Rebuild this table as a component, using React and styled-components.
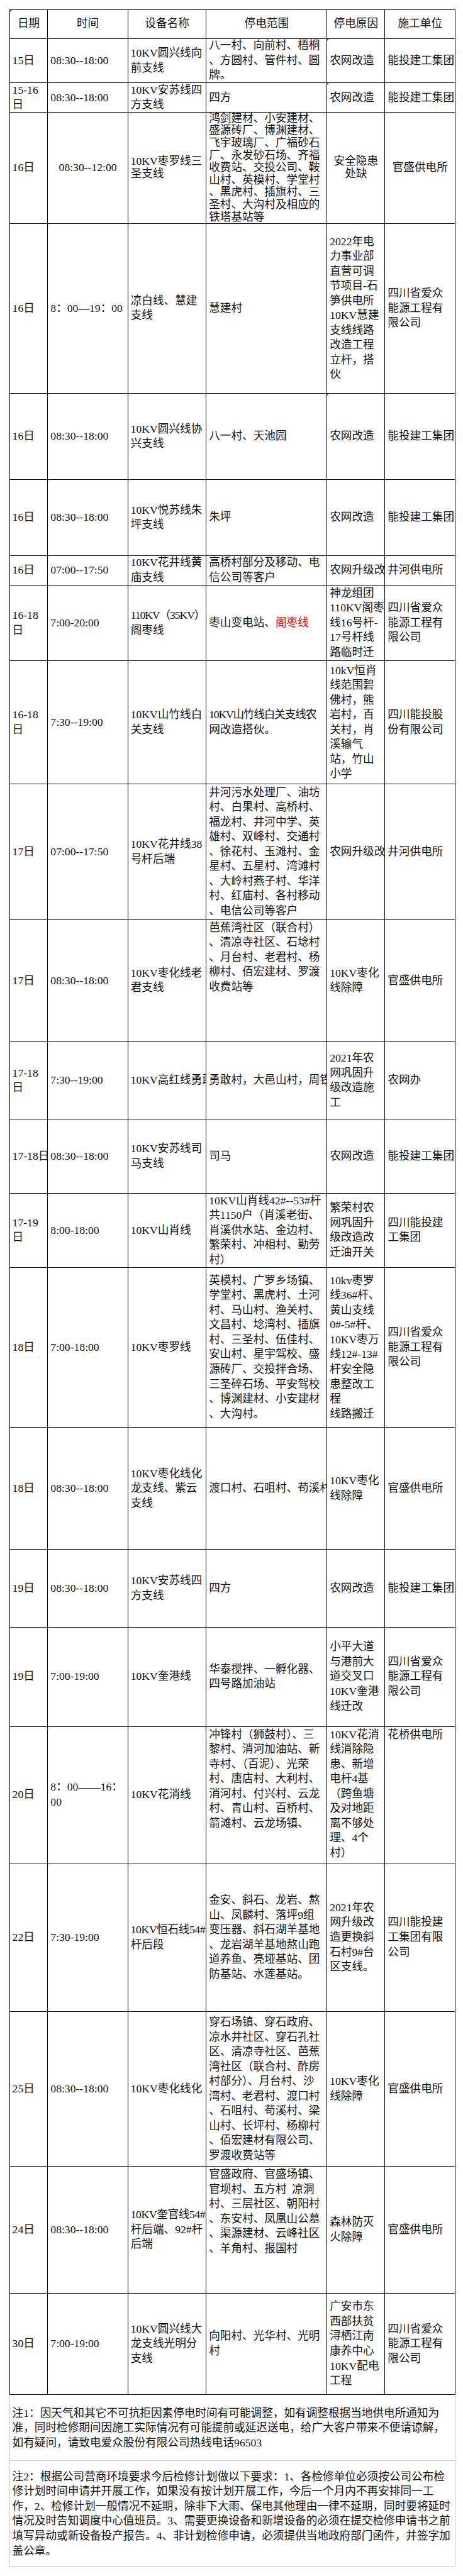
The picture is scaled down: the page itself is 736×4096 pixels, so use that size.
import styled, { createGlobalStyle } from 'styled-components';

const GlobalStyle = createGlobalStyle`
  body {
    margin: 0;
    background: #fff;
    font-family: "Liberation Serif", "Noto Sans CJK SC", serif;
    color: #111;
  }
`;

const COLS = '61px 129px 126px 195px 93px 113px';

const header = ['日期', '时间', '设备名称', '停电范围', '停电原因', '施工单位'];

const rows = [
  { h: 71, cells: [['15日'], ['08:30--18:00'], ['10KV圆兴线向', '前支线'], ['八一村、向前村、梧桐', '、方圆村、管件村、圆', '牌。'], { lines: ['农网改造'], mark: true }, ['能投建工集团']] },
  { h: 47, cells: [['15-16', '日'], ['08:30--18:00'], ['10KV安苏线四', '方支线'], ['四方'], { lines: ['农网改造'], mark: true }, ['能投建工集团']] },
  {
    h: 179, lh: 20, cells: [
      ['16日'], { lines: ['08:30--12:00'], center: true }, ['10KV枣罗线三', '圣支线'],
      ['鸿剑建材、小安建材、', '盛源砖厂、博渊建材、', '飞宇玻璃厂、广福砂石', '厂、永发砂石场、齐福', '收费站、交投公司、鞍', '山村、英模村、学堂村', '、黑虎村、插旗村、三', '圣村、大沟村及相应的', '铁塔基站等'],
      { lines: ['安全隐患', '处缺'], center: true }, { lines: ['官盛供电所'], center: true },
    ],
  },
  {
    h: 275, cells: [
      ['16日'], ['8：00—19：00'], ['凉白线、慧建', '支线'], ['慧建村'],
      ['2022年电', '力事业部', '直营可调', '节项目-石', '笋供电所', '10KV慧建', '支线线路', '改造工程', '立杆，搭', '伙'],
      ['四川省爱众', '能源工程有', '限公司'],
    ],
  },
  { h: 139, cells: [['16日'], ['08:30--18:00'], ['10KV圆兴线协', '兴支线'], ['八一村、天池园'], { lines: ['农网改造'], mark: true }, ['能投建工集团']] },
  { h: 122, cells: [['16日'], ['08:30--18:00'], ['10KV悦苏线朱', '坪支线'], ['朱坪'], ['农网改造'], ['能投建工集团']] },
  { h: 47, cells: [['16日'], ['07:00--17:50'], ['10KV花井线黄', '庙支线'], ['高桥村部分及移动、电', '信公司等客户'], ['农网升级改造'], ['井河供电所']] },
  {
    h: 122, cells: [
      ['16-18', '日'], ['7:00-20:00'], [{ t: '110KV（35KV）', ls: -1.1 }, '阁枣线'], ['RED'],
      ['神龙组团', '110KV阁枣', '线16号杆-', '17号杆线', '路临时迁'], ['四川省爱众', '能源工程有', '限公司'],
    ],
  },
  {
    h: 199, cells: [
      ['16-18', '日'], ['7:30--19:00'], ['10KV山竹线白', '关支线'], [{ t: '10KV山竹线白关支线农', ls: -1.2 }, '网改造搭伙。'],
      ['10kV恒肖', '线范围碧', '佛村，熊', '岩村，百', '关村，肖', '溪输气', '站，竹山', '小学'], ['四川能投股', '份有限公司'],
    ],
  },
  {
    h: 219, cells: [
      ['17日'], ['07:00--17:50'], ['10KV花井线38', '号杆后端'],
      ['井河污水处理厂、油坊', '村、白果村、高桥村、', '福龙村、井河中学、英', '雄村、双峰村、交通村', '、徐花村、玉滩村、金', '星村、五星村、湾滩村', '、大岭村燕子村、华洋', '村、红庙村、各村移动', '、电信公司等客户'],
      ['农网升级改造'], ['井河供电所'],
    ],
  },
  {
    h: 197, cells: [
      ['17日'], ['08:30--18:00'], ['10KV枣化线老', '君支线'],
      { lines: ['芭蕉湾社区（联合村）', '、清凉寺社区、石埝村', '、月台村、老君村、杨', '柳村、佰宏建材、罗渡', '收费站等'], top: true },
      ['10KV枣化', '线除障'], ['官盛供电所'],
    ],
  },
  { h: 125, cells: [['17-18', '日'], ['7:30--19:00'], ['10KV高红线勇敢支线'], ['勇敢村，大邑山村，周铁村'], ['2021年农', '网巩固升', '级改造施', '工'], ['农网办']] },
  { h: 119, cells: [['17-18日'], ['08:30--18:00'], ['10KV安苏线司', '马支线'], ['司马'], ['农网改造'], ['能投建工集团']] },
  {
    h: 119, cells: [
      ['17-19', '日'], ['8:00-18:00'], ['10KV山肖线'],
      ['10KV山肖线42#--53#杆', '共1150户（肖溪老街、', '肖溪供水站、金边村、', '繁荣村、冲相村、勤劳', '村）'],
      ['繁荣村农', '网巩固升', '级改造改', '迁油开关'], ['四川能投建', '工集团'],
    ],
  },
  {
    h: 259, cells: [
      ['18日'], ['7:00-18:00'], ['10KV枣罗线'],
      ['英模村、广罗乡场镇、', '学堂村、黑虎村、土河', '村、马山村、渔关村、', '文昌村、埝湾村、插旗', '村、三圣村、伍佳村、', '安山村、星宇驾校、盛', '源砖厂、交投拌合场、', '三圣碎石场、平安驾校', '、博渊建材、小安建材', '、大沟村。'],
      ['10kv枣罗', '线36#杆、', '黄山支线', '0#-5#杆、', '10KV枣万', '线12#-13#', '杆安全隐', '患整改工', '程', '线路搬迁'],
      ['四川省爱众', '能源工程有', '限公司'],
    ],
  },
  { h: 197, cells: [['18日'], ['08:30--18:00'], ['10KV枣化线化', '龙支线、紫云', '支线'], ['渡口村、石咀村、苟溪村'], ['10KV枣化', '线除障'], ['官盛供电所']] },
  { h: 125, cells: [['19日'], ['08:30--18:00'], ['10KV安苏线四', '方支线'], ['四方'], ['农网改造'], ['能投建工集团']] },
  {
    h: 160, cells: [
      ['19日'], ['7:00-19:00'], ['10KV奎港线'], ['华泰搅拌、一孵化器、', '四号路加油站'],
      ['小平大道', '与港前大', '道交叉口', '10KV奎港', '线迁改'], ['四川省爱众', '能源工程有', '限公司'],
    ],
  },
  {
    h: 221, cells: [
      ['20日'], ['8：00——16：', '00'], ['10KV花消线'],
      { lines: ['冲锋村（狮鼓村）、三', '黎村、消河加油站、新', '寺村、（百泥）、光荣', '村、唐店村、大利村、', '消河村、付兴村、云龙', '村、青山村、百桥村、', '箭滩村、云龙场镇、'], top: true },
      { lines: ['10KV花消', '线消除隐', '患、新增', '电杆4基', '（跨鱼塘', '及对地距', '离不够处', '理、4个', '村）'], top: true },
      { lines: ['花桥供电所'], top: true },
    ],
  },
  {
    h: 240, cells: [
      ['22日'], ['7:30-19:00'], [{ t: '10KV恒石线54#', ls: -0.4 }, '杆后段'],
      ['金安、斜石、龙岩、熬', '山、凤麟村、落坪9组', '变压器、斜石湖羊基地', '、龙岩湖羊基地熬山跑', '道养鱼、亮垭基站、团', '防基站、水莲基站。'],
      ['2021年农', '网升级改', '造更换斜', '石村9#台', '区支线。'], ['四川能投建', '工集团有限', '公司'],
    ],
  },
  {
    h: 250, cells: [
      ['25日'], ['08:30--18:00'], ['10KV枣化线化'],
      ['穿石场镇、穿石政府、', '凉水井社区、穿石孔社', '区、清凉寺社区、芭蕉', '湾社区（联合村、酢房', '村部分）、月台村、沙', '湾村、老君村、渡口村', '、石咀村、苟溪村、梁', '山村、长坪村、杨柳村', '、佰宏建材有限公司、', '罗渡收费站等'],
      ['10KV枣化', '线除障'], ['官盛供电所'],
    ],
  },
  {
    h: 205, cells: [
      ['24日'], ['08:30--18:00'], [{ t: '10KV奎官线54#', ls: -0.4 }, '杆后端、92#杆', '后端'],
      { lines: ['官盛政府、官盛场镇、', '官坝村、五方村\u2002凉洞', '村、三层社区、朝阳村', '、东安村、凤凰山公墓', '、渠源建材、云峰社区', '、羊角村、报国村'], top: true },
      ['森林防灭', '火除障'], ['官盛供电所'],
    ],
  },
  {
    h: 163, cells: [
      ['30日'], ['7:00-19:00'], ['10KV圆兴线大', '龙支线光明分', '支线'], ['向阳村、光华村、光明', '村'],
      ['广安市东', '西部扶贫', '浔栖江南', '康养中心', '10KV配电', '工程'], ['四川省爱众', '能源工程有', '限公司'],
    ],
  },
];

const notes = [
  {
    h: 104,
    lines: [
      '注1：因天气和其它不可抗拒因素停电时间有可能调整，如有调整根据当地供电所通知为',
      '准，同时检修期间因施工实际情况有可能提前或延迟送电，给广大客户带来不便请谅解，',
      '如有疑问，请致电爱众股份有限公司热线电话96503',
    ],
  },
  {
    h: 169,
    lines: [
      '注2：根据公司营商环境要求今后检修计划做以下要求：1、各检修单位必须按公司公布检',
      '修计划时间申请并开展工作，如果没有按计划开展工作，今后一个月内不再安排同一工',
      '作，2、检修计划一般情况不延期，除非下大雨、保电其他理由一律不延期，同时要将延时',
      '情况及时告知调度中心值班员。3、需要更换设备和新增设备的必须在提交检修申请书之前',
      '填写异动或新设备投产报告。4、非计划检修申请，必须提供当地政府部门函件，并签字加',
      '盖公章。',
    ],
  },
];

const Page = styled.div`
  zoom: 0.98;
  width: 750px;
  box-sizing: border-box;
  padding: 15px 0 16px 15px;
  font-size: 18px;
`;

const Sheet = styled.div`
  width: 724px;
  box-sizing: border-box;
  display: flex;
  flex-direction: column;
  gap: 1px;
  background: #000;
  border: 1px solid #000;
`;

const Row = styled.div`
  display: grid;
  grid-template-columns: ${COLS};
  gap: 1px;
  height: ${(p) => p.$h}px;
`;

const Cell = styled.div`
  position: relative;
  background: #fff;
  overflow: hidden;
  display: flex;
  flex-direction: column;
  justify-content: ${(p) => (p.$top ? 'flex-start' : 'center')};
  align-items: ${(p) => (p.$center ? 'center' : 'flex-start')};
  padding: ${(p) => (p.$top ? '1px' : '0')} 4px 0;
  line-height: ${(p) => p.$lh}px;
  white-space: nowrap;

  ${(p) =>
    p.$mark &&
    `
    &::before {
      content: '';
      position: absolute;
      top: 0;
      left: 0;
      border-top: 4px solid #1d8a2a;
      border-right: 4px solid transparent;
    }
  `}
`;

const Line = styled.div`
  letter-spacing: ${(p) => p.$ls || 0}px;
`;

const Red = styled.span`
  color: #ff0000;
`;

const Notes = styled.div`
  width: 724px;
  display: flex;
  flex-direction: column;
`;

const Note = styled.div`
  height: ${(p) => p.$h}px;
  border: 1px solid #c5ccd6;
  border-top: none;
  display: flex;
  flex-direction: column;
  justify-content: center;
  padding: 2px 4px 0;
  line-height: 24px;
  white-space: nowrap;
`;

const renderLine = (ln, k) => {
  if (ln === 'RED') {
    return (
      <Line key={k}>
        枣山变电站、<Red>阁枣线</Red>
      </Line>
    );
  }
  if (typeof ln === 'object') {
    return (
      <Line key={k} $ls={ln.ls}>
        {ln.t}
      </Line>
    );
  }
  return <Line key={k}>{ln}</Line>;
};

const App = () => {
  return (
    <Page>
      <GlobalStyle />
      <Sheet>
        <Row $h={46}>
          {header.map((t, i) => (
            <Cell key={t} $center $lh={24} $mark={i === 0}>
              {t}
            </Cell>
          ))}
        </Row>
        {rows.map((r, i) => (
          <Row key={i} $h={r.h}>
            {r.cells.map((c, j) => {
              const cfg = Array.isArray(c) ? { lines: c } : c;
              return (
                <Cell key={j} $center={cfg.center} $top={cfg.top} $mark={cfg.mark} $lh={r.lh || 24}>
                  {cfg.lines.map(renderLine)}
                </Cell>
              );
            })}
          </Row>
        ))}
      </Sheet>
      <Notes>
        {notes.map((n, i) => (
          <Note key={i} $h={n.h}>
            {n.lines.map((ln, k) => (
              <div key={k}>{ln}</div>
            ))}
          </Note>
        ))}
      </Notes>
    </Page>
  );
};

export default App;
